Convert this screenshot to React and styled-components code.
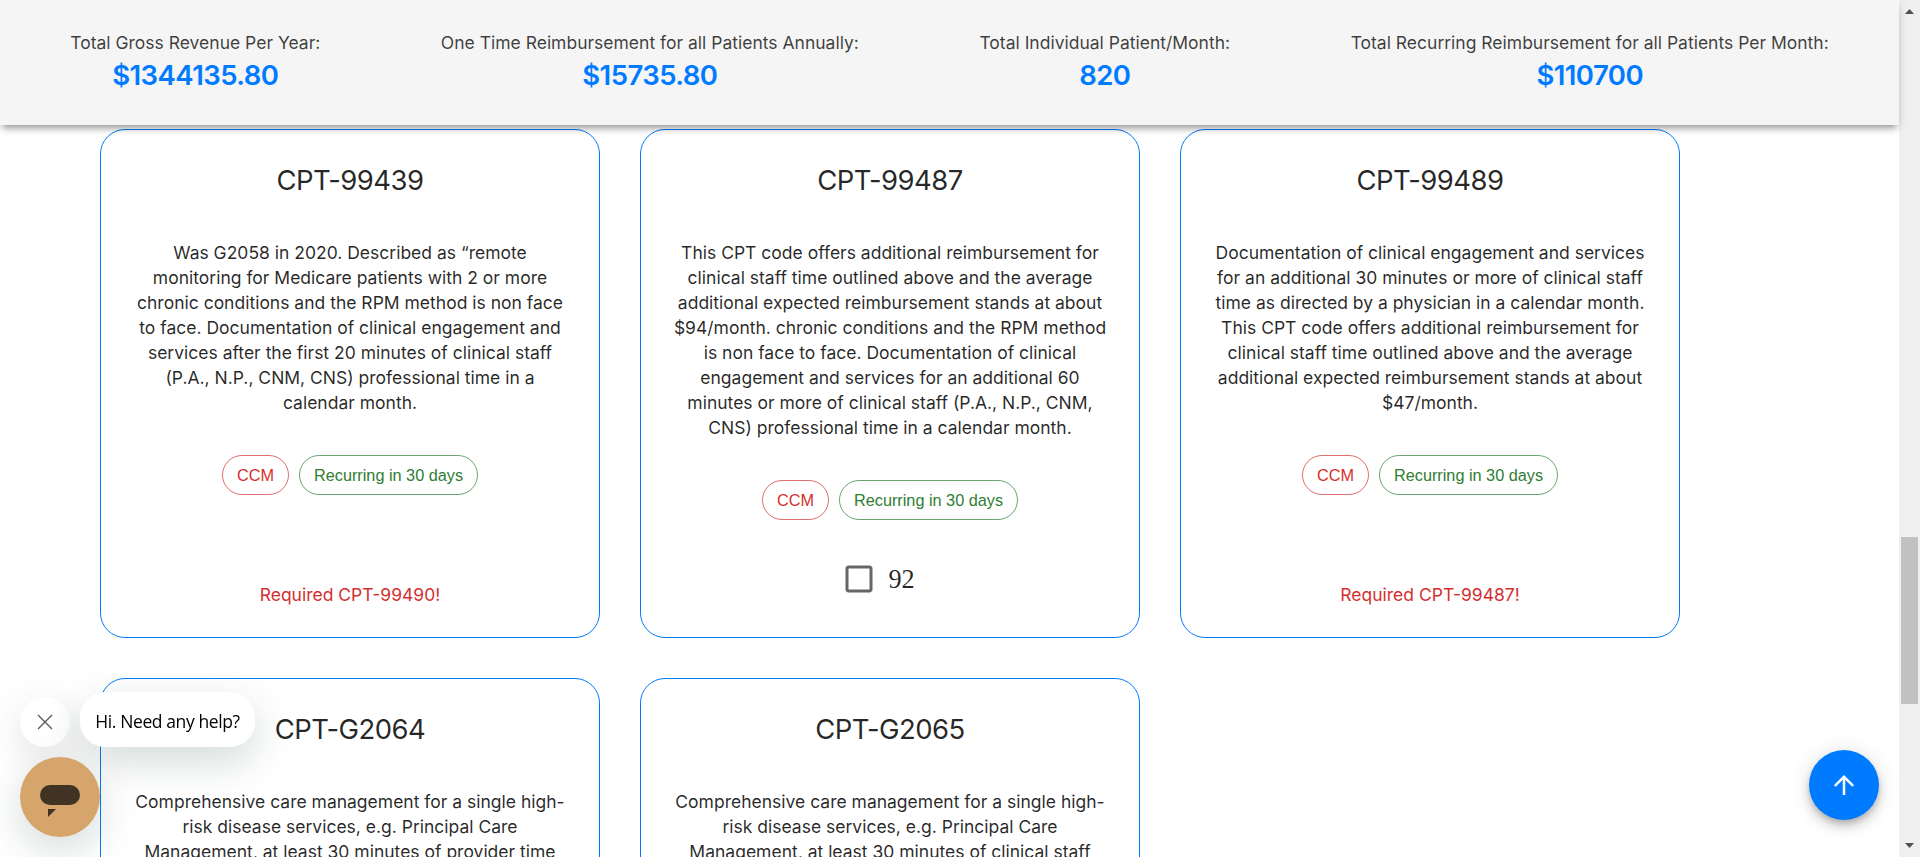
import React from "react";
import styled, { createGlobalStyle } from "styled-components";

const GlobalStyle = createGlobalStyle`
  * { box-sizing: border-box; }
  body {
    margin: 0;
    background: #fff;
    overflow: hidden;
    font-family: Inter, "Liberation Sans", sans-serif;
    color: rgba(0, 0, 0, 0.85);
  }
  h2, p { margin: 0; font-weight: 400; }
  button { border: 0; padding: 0; cursor: pointer; }
`;

const Page = styled.div`
  display: flex;
  width: 100%;
  height: 857px;
  overflow: hidden;
`;

const Content = styled.div`
  flex: 1;
  min-width: 0;
  height: 100%;
  display: flex;
  flex-direction: column;
`;

const SummaryBar = styled.header`
  position: relative;
  z-index: 2;
  flex: none;
  display: flex;
  justify-content: space-around;
  height: 125px;
  padding: 30px 10px 0;
  background: #f5f5f5;
  box-shadow: 0 6px 6px -3px rgba(0, 0, 0, 0.3),
    0 3px 10px 0 rgba(0, 0, 0, 0.14);
`;

const Stat = styled.div`
  text-align: center;
  white-space: nowrap;
`;

const StatLabel = styled.div`
  font-size: 17.5px;
  line-height: 25px;
  font-weight: 400;
  color: rgba(0, 0, 0, 0.76);
`;

const StatValue = styled.div`
  font-size: 27.5px;
  line-height: 40px;
  letter-spacing: -0.55px;
  font-weight: 600;
  color: #007bff;
`;

const CardGrid = styled.main`
  flex: none;
  display: grid;
  grid-template-columns: repeat(3, 500px);
  grid-auto-rows: 509px;
  gap: 40px;
  padding: 4px 0 0 100px;
`;

const Card = styled.section`
  display: flex;
  flex-direction: column;
  align-items: center;
  padding: 30px 30px 0;
  border: 1px solid #007bff;
  border-radius: 25px;
  background: #fff;
  text-align: center;
`;

const CardTitle = styled.h2`
  font-size: 27.5px;
  line-height: 40px;
  letter-spacing: -0.55px;
`;

const Description = styled.p`
  margin-top: 40px;
  width: 436px;
  font-size: 17.5px;
  line-height: 25.025px;
`;

const Chips = styled.div`
  display: flex;
  gap: 10px;
  margin-top: 40px;
`;

const tones = {
  error: { text: "#d32f2f", border: "rgba(211, 47, 47, 0.7)" },
  success: { text: "#2e7d32", border: "rgba(46, 125, 50, 0.7)" },
};

const Chip = styled.span`
  display: flex;
  align-items: center;
  height: 40px;
  padding: 0 14px;
  border: 1px solid ${(p) => tones[p.$tone].border};
  border-radius: 20px;
  color: ${(p) => tones[p.$tone].text};
  font: 16.25px "Liberation Sans", Arial, sans-serif;
  white-space: nowrap;
`;

const Required = styled.p`
  margin: auto 0 30px;
  font-size: 17.5px;
  line-height: 25px;
  color: #d32f2f;
`;

const PatientCount = styled.label`
  display: flex;
  align-items: center;
  gap: 11px;
  margin: 40px 24px 0 0;
  font: 26.25px/38px "Liberation Serif", "Times New Roman", serif;
`;

const Count = styled.span`
  padding-top: 1px;
`;

const BoxIcon = styled.svg`
  display: block;
  width: 36px;
  height: 36px;
  margin-bottom: 1px;
  fill: rgba(0, 0, 0, 0.6);
`;

const ScrollTrack = styled.aside`
  flex: none;
  display: flex;
  flex-direction: column;
  align-items: center;
  width: 21px;
  height: 100%;
  background: #f0f0f0;
`;

const ScrollArrow = styled.svg`
  width: 9px;
  height: 5px;
  fill: #505050;
  margin: ${(p) => (p.$end ? "auto 0 9px" : "9px 0 0")};
`;

const ScrollThumb = styled.div`
  width: 17px;
  height: 167px;
  margin-top: 523px;
  background: #c1c1c1;
`;

const TopButton = styled.button`
  position: fixed;
  right: 41px;
  bottom: 37px;
  z-index: 3;
  display: flex;
  align-items: center;
  justify-content: center;
  width: 70px;
  height: 70px;
  border-radius: 50%;
  background: #007bff;
  box-shadow: 0 3.75px 6.25px -1.25px rgba(0, 0, 0, 0.2),
    0 7.5px 12.5px 0 rgba(0, 0, 0, 0.14), 0 1.25px 22.5px 0 rgba(0, 0, 0, 0.12);
  svg { width: 30px; height: 30px; fill: #fff; }
`;

const ChatWidget = styled.div`
  position: fixed;
  left: 20px;
  bottom: 20px;
  z-index: 3;
  display: flex;
  flex-direction: column;
  gap: 10px;
`;

const ChatPrompt = styled.div`
  display: flex;
  align-items: flex-end;
  gap: 10px;
`;

const CloseButton = styled.button`
  display: flex;
  align-items: center;
  justify-content: center;
  width: 50px;
  height: 50px;
  border-radius: 50%;
  background: #fff;
  box-shadow: 0 12px 40px rgba(0, 50, 45, 0.14);
  svg { width: 16px; height: 16px; stroke: #565b60; stroke-width: 1.4; }
`;

const ChatBubble = styled.div`
  display: flex;
  align-items: center;
  justify-content: center;
  width: 175px;
  height: 55px;
  padding-top: 2px;
  border-radius: 25px;
  background: #fff;
  box-shadow: 0 14px 40px rgba(0, 50, 45, 0.18);
  color: #000;
  font: 17.5px "Open Sans", "Noto Sans", sans-serif;
  letter-spacing: -0.4px;
  white-space: nowrap;
`;

const Launcher = styled.button`
  width: 80px;
  height: 80px;
  border-radius: 50%;
  background: #d6a56c;
  box-shadow: 0 12px 40px rgba(0, 50, 45, 0.18);
  svg { display: block; width: 80px; height: 80px; fill: #403323; }
`;

const stats = [
  ["Total Gross Revenue Per Year:", "$1344135.80"],
  ["One Time Reimbursement for all Patients Annually:", "$15735.80"],
  ["Total Individual Patient/Month:", "820"],
  ["Total Recurring Reimbursement for all Patients Per Month:", "$110700"],
];

const cards = [
  {
    code: "CPT-99439",
    lines: [
      "Was G2058 in 2020. Described as “remote",
      "monitoring for Medicare patients with 2 or more",
      "chronic conditions and the RPM method is non face",
      "to face. Documentation of clinical engagement and",
      "services after the first 20 minutes of clinical staff",
      "(P.A., N.P., CNM, CNS) professional time in a",
      "calendar month.",
    ],
    required: "Required CPT-99490!",
  },
  {
    code: "CPT-99487",
    lines: [
      "This CPT code offers additional reimbursement for",
      "clinical staff time outlined above and the average",
      "additional expected reimbursement stands at about",
      "$94/month. chronic conditions and the RPM method",
      "is non face to face. Documentation of clinical",
      "engagement and services for an additional 60",
      "minutes or more of clinical staff (P.A., N.P., CNM,",
      "CNS) professional time in a calendar month.",
    ],
    count: 92,
  },
  {
    code: "CPT-99489",
    lines: [
      "Documentation of clinical engagement and services",
      "for an additional 30 minutes or more of clinical staff",
      "time as directed by a physician in a calendar month.",
      "This CPT code offers additional reimbursement for",
      "clinical staff time outlined above and the average",
      "additional expected reimbursement stands at about",
      "$47/month.",
    ],
    required: "Required CPT-99487!",
  },
  {
    code: "CPT-G2064",
    lines: [
      "Comprehensive care management for a single high-",
      "risk disease services, e.g. Principal Care",
      "Management, at least 30 minutes of provider time",
    ],
  },
  {
    code: "CPT-G2065",
    lines: [
      "Comprehensive care management for a single high-",
      "risk disease services, e.g. Principal Care",
      "Management, at least 30 minutes of clinical staff",
    ],
  },
];

const DescriptionLine = styled.span`
  display: block;
  white-space: nowrap;
`;

function CodeCard({ code, lines, required, count }) {
  return (
    <Card>
      <CardTitle>{code}</CardTitle>
      <Description>
        {lines.map((line) => (
          <DescriptionLine key={line}>{line} </DescriptionLine>
        ))}
      </Description>
      {(required || count) && (
        <Chips>
          <Chip $tone="error">CCM</Chip>
          <Chip $tone="success">Recurring in 30 days</Chip>
        </Chips>
      )}
      {required && <Required>{required}</Required>}
      {count && (
        <PatientCount>
          <BoxIcon viewBox="0 0 24 24">
            <path d="M19 5v14H5V5h14m0-2H5c-1.1 0-2 .9-2 2v14c0 1.1.9 2 2 2h14c1.1 0 2-.9 2-2V5c0-1.1-.9-2-2-2z" />
          </BoxIcon>
          <Count>{count}</Count>
        </PatientCount>
      )}
    </Card>
  );
}

export default function App() {
  return (
    <>
      <GlobalStyle />
      <Page>
        <Content>
          <SummaryBar>
            {stats.map(([label, value]) => (
              <Stat key={label}>
                <StatLabel>{label}</StatLabel>
                <StatValue>{value}</StatValue>
              </Stat>
            ))}
          </SummaryBar>
          <CardGrid>
            {cards.map((card) => (
              <CodeCard key={card.code} {...card} />
            ))}
          </CardGrid>
        </Content>
        <ScrollTrack>
          <ScrollArrow viewBox="0 0 9 5"><path d="M0 5L4.5 0L9 5z" /></ScrollArrow>
          <ScrollThumb />
          <ScrollArrow $end viewBox="0 0 9 5"><path d="M0 0L4.5 5L9 0z" /></ScrollArrow>
        </ScrollTrack>
      </Page>
      <ChatWidget>
        <ChatPrompt>
          <CloseButton aria-label="Close">
            <svg viewBox="0 0 16 16"><path d="M1 1L15 15M15 1L1 15" /></svg>
          </CloseButton>
          <ChatBubble>Hi. Need any help?</ChatBubble>
        </ChatPrompt>
        <Launcher aria-label="Open chat">
          <svg viewBox="0 0 80 80">
            <rect x="20" y="28" width="40" height="20" rx="10" />
            <path d="M28 52H36L28 60z" />
          </svg>
        </Launcher>
      </ChatWidget>
      <TopButton aria-label="Back to top">
        <svg viewBox="0 0 24 24">
          <path d="M4 12l1.41 1.41L11 7.83V20h2V7.83l5.58 5.59L20 12l-8-8-8 8z" />
        </svg>
      </TopButton>
    </>
  );
}
